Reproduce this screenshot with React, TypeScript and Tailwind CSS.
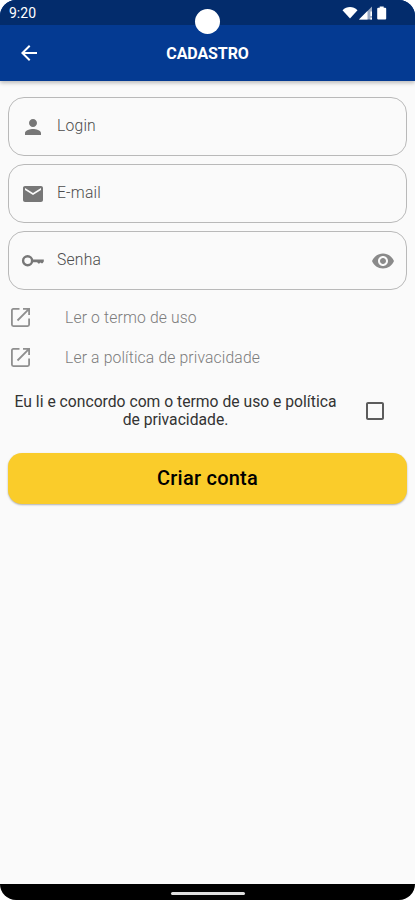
import type { ReactNode } from 'react'
import {
  MdArrowBack,
  MdCheckBoxOutlineBlank,
  MdEmail,
  MdPerson,
  MdRemoveRedEye,
} from 'react-icons/md'

interface FieldProps {
  icon: ReactNode
  label: string
  trailing?: ReactNode
}

function KeyIcon() {
  return (
    <svg width="24" height="24" viewBox="0 0 24 24" fill="none">
      <circle cx="6.6" cy="11.7" r="4.5" stroke="currentColor" strokeWidth="2.4" />
      <path d="M10.5 10.4H22.8V12.5L21.6 14.3H20.4L19.4 13.4 18.4 14.4H17.2L16.2 13.2H10.5Z" fill="currentColor" />
    </svg>
  )
}

function OpenIcon() {
  return (
    <svg width="25" height="25" viewBox="0 0 25 25" fill="none" stroke="currentColor" strokeWidth="1.8">
      <path d="M11.5 3.9H5.4Q3.9 3.9 3.9 5.4V19.6Q3.9 21.1 5.4 21.1H19.6Q21.1 21.1 21.1 19.6V13.5" />
      <path d="M15 3.9H21.1V10M20.8 4.2L9.5 15.5" />
    </svg>
  )
}

function Field({ icon, label, trailing }: FieldProps) {
  return (
    <label className="flex h-[59px] items-center rounded-2xl border border-[#b9b9b9] pl-3 pr-[11px] text-[#777]">
      <span className="flex w-6 flex-none justify-center">{icon}</span>
      <span className="ml-3 flex-1 pb-px text-[15.7px] font-light leading-5 tracking-[0.2px] text-[#4c4c4c]">
        {label}
      </span>
      {trailing}
    </label>
  )
}

function TermsLink({ children }: { children: ReactNode }) {
  return (
    <a className="flex h-10 items-center text-[#8f8f8f]">
      <OpenIcon />
      <span className="ml-8 pt-0.5 text-[15.7px] font-light leading-5 tracking-[0.15px] text-[#7c7c7c]">
        {children}
      </span>
    </a>
  )
}

function StatusBar() {
  return (
    <div className="relative flex h-[25px] items-center justify-between bg-[#032c6c] pl-[9px] pr-[27px] text-white">
      <span className="text-[14px] leading-4">9:20</span>
      <svg width="46" height="14" viewBox="0 0 46 14" fill="currentColor">
        <path d="M0.5 4.2C4.8-.1 11.2-.1 15.5 4.2L8 12.6Z" />
        <path d="M30 .5V13.5H17Z" opacity=".6" />
        <path d="M25.5 5V13.5H17Z" />
        <path d="M28.4 5.5H30V10H28.4ZM28.4 11.7H30V13.5H28.4Z" />
        <path d="M37.7.5h4v1.2h1.5q1 0 1 1v9.8q0 1-1 1h-7q-1 0-1-1v-9.8q0-1 1-1h1.5Z" />
      </svg>
      {/* camera cutout */}
      <span className="absolute left-[195px] top-[9px] z-10 size-[25px] rounded-full bg-white" />
    </div>
  )
}

export default function App() {
  return (
    <div className="h-[900px] w-full bg-white font-[Roboto,sans-serif]">
      <div className="flex h-full flex-col overflow-hidden rounded-[16px] bg-[#fafafa]">
        <header className="flex-none bg-[#043a92] text-white shadow-[0_2px_4px_rgba(0,0,0,0.25)]">
          <StatusBar />
          <div className="grid h-14 grid-cols-[1fr_auto_1fr] items-center px-[17px]">
            <MdArrowBack size={24} />
            <h1 className="pt-px text-base font-bold leading-5 tracking-[-0.1px]">CADASTRO</h1>
          </div>
        </header>

        <main className="flex flex-1 flex-col px-2 pt-4">
          <form className="flex flex-col gap-2">
            <Field icon={<MdPerson size={24} />} label="Login" />
            <Field icon={<MdEmail size={24} />} label="E-mail" />
            <Field
              icon={<KeyIcon />}
              label="Senha"
              trailing={<MdRemoveRedEye size={24} className="text-[#8a8a8a]" />}
            />
          </form>

          <nav className="mt-[7px] flex flex-col">
            <TermsLink>Ler o termo de uso</TermsLink>
            <TermsLink>Ler a política de privacidade</TermsLink>
          </nav>

          <div className="mt-[15px] flex items-center pr-5">
            <p className="flex-1 pr-5 pt-px text-center text-[15.7px] leading-[18px] text-[#333]">
              Eu li e concordo com o termo de uso e política
              <br />
              de privacidade.
            </p>
            <MdCheckBoxOutlineBlank size={24} className="text-[#5c5c5c]" />
          </div>

          <button
            type="button"
            className="mt-6 h-[51px] rounded-[14px] bg-[#facc2a] pb-px text-[20px] font-medium tracking-[0.25px] text-black shadow-[0_1px_2px_rgba(0,0,0,0.3)]"
          >
            Criar conta
          </button>
        </main>

        <footer className="flex h-4 flex-none items-center justify-center bg-black pt-0.5">
          <span className="h-[3px] w-[74px] rounded-full bg-[#dedede]" />
        </footer>
      </div>
    </div>
  )
}
